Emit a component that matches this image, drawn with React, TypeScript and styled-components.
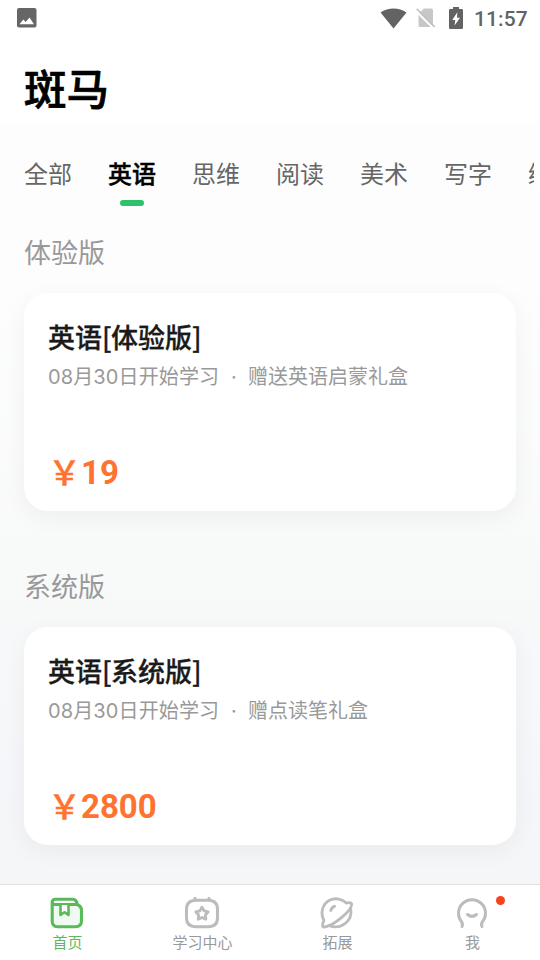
import React from "react";
import styled, { createGlobalStyle } from "styled-components";

const GlobalStyle = createGlobalStyle`
  * { box-sizing: border-box; }
  body { margin: 0; background: #fff; overflow: hidden; }
`;

const Screen = styled.div`
  width: 540px;
  height: 960px;
  display: flex;
  flex-direction: column;
  overflow: hidden;
  font-family: "Noto Sans CJK SC", sans-serif;
  background: linear-gradient(#fff 0, #fff 120px, #fdfdfd 125px, #fdfdfd 290px, #f8faf9 560px, #f5f6f9 800px, #f5f6f8 884px);
`;

const StatusBar = styled.header`
  flex: none;
  height: 36px;
  padding: 0 12px 0 17px;
  display: flex;
  align-items: center;
  justify-content: space-between;
`;

const StatusIcons = styled.div`
  display: flex;
  align-items: center;
  height: 36px;
  svg { display: block; }
`;

const Clock = styled.span`
  width: 54px;
  margin-left: 11px;
  padding-top: 2px;
  font: 500 21px/24px Roboto, sans-serif;
  letter-spacing: 0.1px;
  color: #636363;
  white-space: nowrap;
`;

const Brand = styled.h1`
  flex: none;
  margin: 20px 0 0 24px;
  height: 62px;
  font-size: 42.5px;
  line-height: 62px;
  font-weight: 500;
  -webkit-text-stroke: 0.7px #000;
  color: #000;
`;

const Tabs = styled.nav`
  flex: none;
  margin: 37px 6px 0 0;
  padding-left: 24px;
  height: 52px;
  display: flex;
  gap: 36px;
  overflow: hidden;
`;

const Tab = styled.div<{ $active?: boolean }>`
  flex: none;
  display: flex;
  flex-direction: column;
  align-items: center;
  font-size: 24px;
  line-height: 36px;
  white-space: nowrap;
  color: ${(p) => (p.$active ? "#000" : "#666")};
  -webkit-text-stroke: ${(p) => (p.$active ? "0.4px #000" : "0")};
  font-weight: ${(p) => (p.$active ? 500 : 400)};
`;

const TabMark = styled.span`
  width: 24px;
  height: 6px;
  margin-top: 9px;
  border-radius: 3px;
  background: #2dc26c;
`;

const Content = styled.main`
  flex: 1;
  padding: 25px 24px 0;
  min-height: 0;
`;

const Section = styled.section`
  height: 334px;
`;

const SectionTitle = styled.h2`
  margin: 0 0 21px;
  height: 40px;
  font-size: 27px;
  line-height: 40px;
  font-weight: 400;
  color: #999;
`;

const Card = styled.article`
  height: 218px;
  padding: 24px 24px 0;
  border-radius: 24px;
  background: #fff;
  box-shadow: 0 6px 24px rgba(0, 0, 0, 0.05);
`;

const CourseTitle = styled.h3`
  margin: 0;
  height: 40px;
  font-size: 27px;
  line-height: 40px;
  font-weight: 500;
  -webkit-text-stroke: 0.3px #1a1a1a;
  color: #1a1a1a;
  white-space: nowrap;
`;

const Bracket = styled.span`
  display: inline-block;
  width: 9px;
`;

const Meta = styled.div`
  display: flex;
  height: 34px;
  margin-top: 3px;
  font-family: Inter, "Noto Sans CJK SC", sans-serif;
  font-size: 20px;
  line-height: 34px;
  color: #999;
  white-space: nowrap;
`;

const StartDate = styled.span`
  width: 171px;
  letter-spacing: 0.12px;
`;

const MetaDot = styled.span`
  width: 29px;
  padding-left: 1px;
  text-align: center;
`;

const Price = styled.div`
  display: flex;
  margin-top: 57px;
  height: 44px;
  font: 700 33px/44px Roboto, "Noto Sans CJK SC", sans-serif;
  color: #ff7330;
`;

const Currency = styled.span`
  width: 33px;
  line-height: 40px;
  font-family: "Noto Sans CJK SC", sans-serif;
  font-weight: 500;
  -webkit-text-stroke: 0.4px #ff7330;
`;

const BottomNav = styled.nav`
  flex: none;
  height: 76px;
  display: grid;
  grid-template-columns: repeat(4, 1fr);
  border-top: 1px solid #dfe0e0;
  background: #fff;
`;

const NavItem = styled.div<{ $active?: boolean }>`
  display: flex;
  flex-direction: column;
  align-items: center;
  padding-top: 10px;
  color: ${(p) => (p.$active ? "#5aba5b" : "#999")};
`;

const NavIcon = styled.div`
  position: relative;
  width: 37px;
  height: 36px;
  svg { display: block; }
`;

const NavLabel = styled.span`
  font-size: 15px;
  line-height: 22px;
  white-space: nowrap;
`;

const Badge = styled.span`
  position: absolute;
  left: 42px;
  top: 1px;
  width: 9px;
  height: 9px;
  border-radius: 50%;
  background: #f4431f;
`;

const PictureIcon = () => (
  <svg width="20" height="20" viewBox="0 0 20 20">
    <rect width="19.5" height="19.5" rx="2" fill="#666" />
    <path d="M2.500 16.300 6.300 11.500 8.700 14 12.500 9.500 17 16.300Z" fill="#fff" />
  </svg>
);

const WifiIcon = () => (
  <svg width="27" height="21" viewBox="0 0 27 21">
    <path d="M13.5 20.5 .5 4.6C8-1 19-1 26.5 4.6Z" fill="#636363" />
  </svg>
);

const NoSimIcon = () => (
  <svg width="20" height="22" viewBox="0 0 20 22">
    <path d="M8 1.500h7q2 0 2 2V20H4q-1.500 0-1.500-1.500V7Z" fill="#c7c7c7" />
    <path d="M-.8 3.200 17.700 21.700" stroke="#fff" strokeWidth="2" />
    <path d="M.8 1.800 18.800 20" stroke="#c2c2c2" strokeWidth="1.700" />
  </svg>
);

const BatteryIcon = () => (
  <svg width="14" height="22" viewBox="0 0 14 22">
    <path d="M4 0h6v2h2.700q1.300 0 1.300 1.300v17.400q0 1.300-1.300 1.300H1.300Q0 22 0 20.700V3.300Q0 2 1.300 2H4Z" fill="#636363" />
    <path d="M8.300 5.300 3.300 13h3L5.600 18.500 11 10.700H8Z" fill="#fff" />
  </svg>
);

const HomeIcon = () => (
  <svg width="36" height="36" viewBox="0 0 36 36" fill="none" stroke="#5aba5b" strokeWidth="3.1" strokeLinejoin="round" strokeLinecap="round">
    <path d="M3.200 8v18q0 5.700 5.300 5.700h18q6 0 6-6V15.500q0-4.500-4.500-6H6Z" fill="#effaf0" />
    <path d="M6.800 4.200h16.500q4.700 0 4.700 5.300H6.500Q3.200 9.500 3.200 6.900T6.800 4.200Z" fill="#fff" />
    <path d="M11.500 10v10l4-2.800 4 2.800V10" fill="#fff" strokeWidth="2.600" />
  </svg>
);

const StudyIcon = () => (
  <svg width="36" height="36" viewBox="0 0 36 36" fill="none" stroke="#bcbcbc" strokeLinejoin="round" strokeLinecap="round">
    <path d="M11 3.200v1.600M25 3.200v1.600" strokeWidth="3" />
    <path d="M12 5.200h12q9.500 0 9.500 9v8.500q0 9-9.500 9H12q-9.500 0-9.500-9v-8.500q0-9 9.500-9Z" strokeWidth="3" />
    <path d="m18 12.200 2.100 3.700 4.100.9-2.800 3.200.4 4.200-3.800-1.700-3.800 1.700.4-4.200-2.800-3.200 4.100-.9Z" strokeWidth="2.900" />
  </svg>
);

const ExploreIcon = () => (
  <svg width="36" height="36" viewBox="0 0 36 36" fill="none" stroke="#bcbcbc" strokeWidth="2.800" strokeLinejoin="round" strokeLinecap="round">
    <path d="M4.900 25.300C1 17.500 3.500 9 10.500 5.300 16.500 2.300 23.300 4 27.300 8.100 30 7.400 32.700 7.500 32.700 9.300 32.700 16 13 32 5 32c-2.200 0-1.700-3.500-.1-6.700Z" />
    <path d="M31.700 13.500C34 26.500 21.500 35.300 9.800 30.500" />
    <path d="M11.800 15.500q.6-3.200 3.800-4.200" />
  </svg>
);

const ProfileIcon = () => (
  <svg width="36" height="36" viewBox="0 0 36 36" fill="none" stroke="#bcbcbc" strokeWidth="3" strokeLinecap="round" strokeLinejoin="round">
    <path d="M8 31.500q1.300-2.300-.8-5.300C5 23.500 4.500 21 4.500 18.200a13.500 13.500 0 0 1 27 0c0 2.800-.5 5.300-2.700 8q-2.100 3-.8 5.300" />
    <path d="M13.500 19.500q4.500 3.800 9 0" />
  </svg>
);

const tabs = ["全部", "英语", "思维", "阅读", "美术", "写字", "编程"];

const courses = [
  { group: "体验版", gift: "赠送英语启蒙礼盒", price: "19" },
  { group: "系统版", gift: "赠点读笔礼盒", price: "2800" },
];

const navItems = [
  { label: "首页", Icon: HomeIcon, active: true, badge: false },
  { label: "学习中心", Icon: StudyIcon, active: false, badge: false },
  { label: "拓展", Icon: ExploreIcon, active: false, badge: false },
  { label: "我", Icon: ProfileIcon, active: false, badge: true },
];

const WifiSlot = styled.span`
  margin-right: 9px;
`;

const SimSlot = styled.span`
  margin-right: 13px;
`;

export default function App() {
  return (
    <>
      <GlobalStyle />
      <Screen>
        <StatusBar>
          <StatusIcons><PictureIcon /></StatusIcons>
          <StatusIcons>
            <WifiSlot><WifiIcon /></WifiSlot>
            <SimSlot><NoSimIcon /></SimSlot>
            <BatteryIcon />
            <Clock>11:57</Clock>
          </StatusIcons>
        </StatusBar>
        <Brand>斑马</Brand>
        <Tabs>
          {tabs.map((name, i) => (
            <Tab key={name} $active={i === 1}>
              {name}
              {i === 1 && <TabMark />}
            </Tab>
          ))}
        </Tabs>
        <Content>
          {courses.map((c) => (
            <Section key={c.group}>
              <SectionTitle>{c.group}</SectionTitle>
              <Card>
                <CourseTitle>
                  英语<Bracket>[</Bracket>{c.group}<Bracket>]</Bracket>
                </CourseTitle>
                <Meta>
                  <StartDate>08月30日开始学习</StartDate>
                  <MetaDot>·</MetaDot>
                  <span>{c.gift}</span>
                </Meta>
                <Price>
                  <Currency>￥</Currency>
                  <span>{c.price}</span>
                </Price>
              </Card>
            </Section>
          ))}
        </Content>
        <BottomNav>
          {navItems.map(({ label, Icon, active, badge }) => (
            <NavItem key={label} $active={active}>
              <NavIcon>
                <Icon />
                {badge && <Badge />}
              </NavIcon>
              <NavLabel>{label}</NavLabel>
            </NavItem>
          ))}
        </BottomNav>
      </Screen>
    </>
  );
}
